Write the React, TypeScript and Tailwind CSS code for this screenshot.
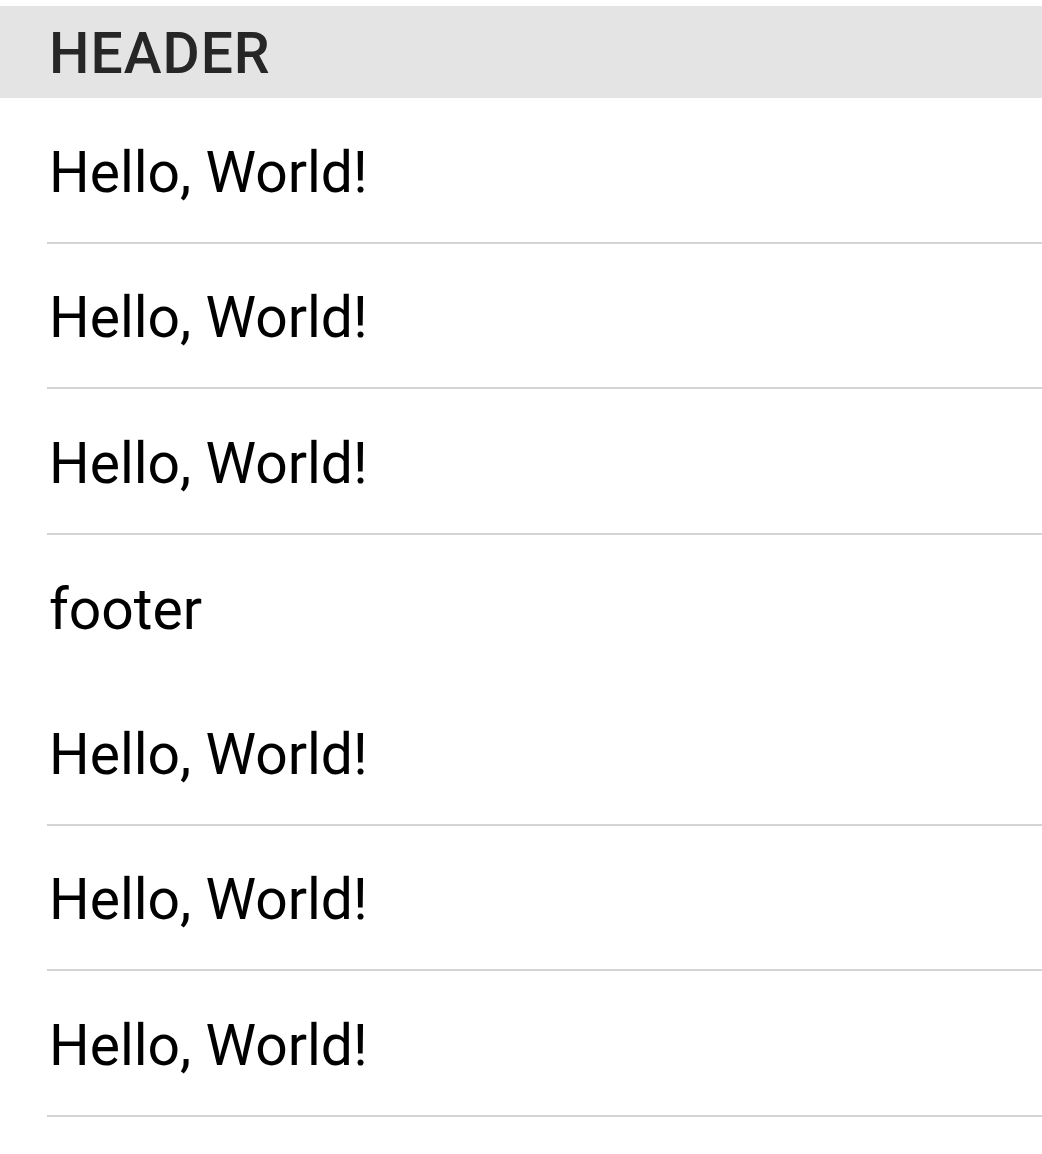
const rowsTop = ['Hello, World!', 'Hello, World!', 'Hello, World!']
const rowsBottom = ['Hello, World!', 'Hello, World!', 'Hello, World!']

function Row({ text }: { text: string }) {
  return (
    <div className="pl-[47px]">
      <div className="h-[145.5px] box-border border-b-2 border-[#d4d4d4] flex items-center pt-[5px]">
        <span className="text-[57px] leading-none text-black pl-[2px]">{text}</span>
      </div>
    </div>
  )
}

export default function App() {
  return (
    <div className="min-h-[1154px] bg-white pt-[6px]" style={{ fontFamily: 'Roboto, "Liberation Sans", sans-serif' }}>
      {/* Section header */}
      <div className="h-[92px] bg-[#e4e4e4] flex items-center pl-[49px] pt-[3px]">
        <span className="text-[57px] leading-none font-medium tracking-[1px] text-[#262626]">HEADER</span>
      </div>

      {rowsTop.map((t, i) => (
        <Row key={i} text={t} />
      ))}

      {/* Section footer */}
      <div className="h-[145.5px] flex items-center pl-[49px] pt-[4px]">
        <span className="text-[57px] leading-none text-black">footer</span>
      </div>

      {rowsBottom.map((t, i) => (
        <Row key={i} text={t} />
      ))}
    </div>
  )
}
